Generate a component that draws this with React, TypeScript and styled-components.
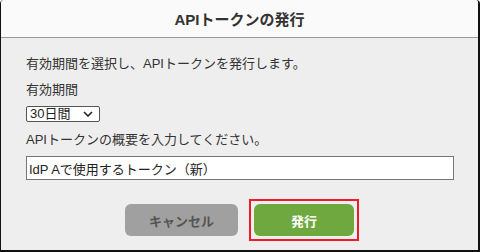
import styled, { createGlobalStyle } from "styled-components";

const Global = createGlobalStyle`
  html, body {
    margin: 0;
    padding: 0;
    background: #fff;
  }
  body {
    font-family: "Liberation Sans", "Noto Sans CJK JP", sans-serif;
    color: #333;
  }
`;

const Dialog = styled.div`
  width: 480px;
  height: 252px;
  box-sizing: border-box;
  border-left: 1px solid #111;
  border-right: 2px solid #111;
  border-bottom: 2px solid #111;
  border-radius: 4px 4px 0 0;
  background: #eeeeee;
  display: flex;
  flex-direction: column;
  overflow: hidden;
`;

const Header = styled.div`
  height: 37px;
  flex: none;
  background: #fafafa;
  border-bottom: 1px solid #9a9a9a;
  display: flex;
  align-items: center;
  justify-content: center;
  font-size: 15px;
  font-weight: bold;
  color: #333;
`;

const Body = styled.div`
  padding: 17px 25px 0 25px;
  display: flex;
  flex-direction: column;
  font-size: 13px;
`;

const Text = styled.p<{ gap?: number }>`
  margin: 0 0 ${props => props.gap ?? 0}px 0;
  line-height: 18px;
`;

const Select = styled.select`
  width: 74px;
  height: 16px;
  box-sizing: border-box;
  margin: 0 0 9px 0;
  padding: 0 0 0 3px;
  font-family: inherit;
  font-size: 13px;
  color: #222;
  background: #fff;
  border: 1px solid #555;
  border-radius: 2px;
  appearance: none;
  background-image: url("data:image/svg+xml;utf8,<svg xmlns='http://www.w3.org/2000/svg' width='10' height='6'><path d='M1 1 L5 5 L9 1' fill='none' stroke='%23222' stroke-width='1.6'/></svg>");
  background-repeat: no-repeat;
  background-position: right 6px center;
  line-height: 14px;
`;

const Input = styled.input`
  width: 428px;
  height: 24px;
  box-sizing: border-box;
  margin: 0;
  padding: 0 2px;
  font-family: inherit;
  font-size: 13px;
  color: #222;
  background: #fff;
  border: 1px solid #777;
  border-radius: 0;
`;

const Buttons = styled.div`
  display: flex;
  justify-content: center;
  align-items: center;
  gap: 11px;
  margin-top: 19px;
  padding-left: 5px;
`;

const Focus = styled.span`
  display: flex;
  padding: 3px;
  border: 2px solid #ee1c24;
`;

const Button = styled.button<{ primary?: boolean }>`
  height: 32px;
  width: ${props => (props.primary ? 100 : 113)}px;
  border: none;
  border-radius: 6px;
  font-family: inherit;
  font-size: 13px;
  font-weight: bold;
  background: ${props => (props.primary ? "#6ea83e" : "#a0a0a0")};
  color: ${props => (props.primary ? "#fff" : "#555")};
  outline: none;
  padding: 0;
`;

export default function App() {
  return (
    <>
      <Global />
      <Dialog>
        <Header>APIトークンの発行</Header>
        <Body>
          <Text gap={8}>有効期間を選択し、APIトークンを発行します。</Text>
          <Text gap={7}>有効期間</Text>
          <Select defaultValue="30">
            <option value="30">30日間</option>
            <option value="60">60日間</option>
            <option value="90">90日間</option>
          </Select>
          <Text gap={7}>APIトークンの概要を入力してください。</Text>
          <Input defaultValue="IdP Aで使用するトークン（新）" />
          <Buttons>
            <Button>キャンセル</Button>
            <Focus>
              <Button primary>発行</Button>
            </Focus>
          </Buttons>
        </Body>
      </Dialog>
    </>
  );
}
